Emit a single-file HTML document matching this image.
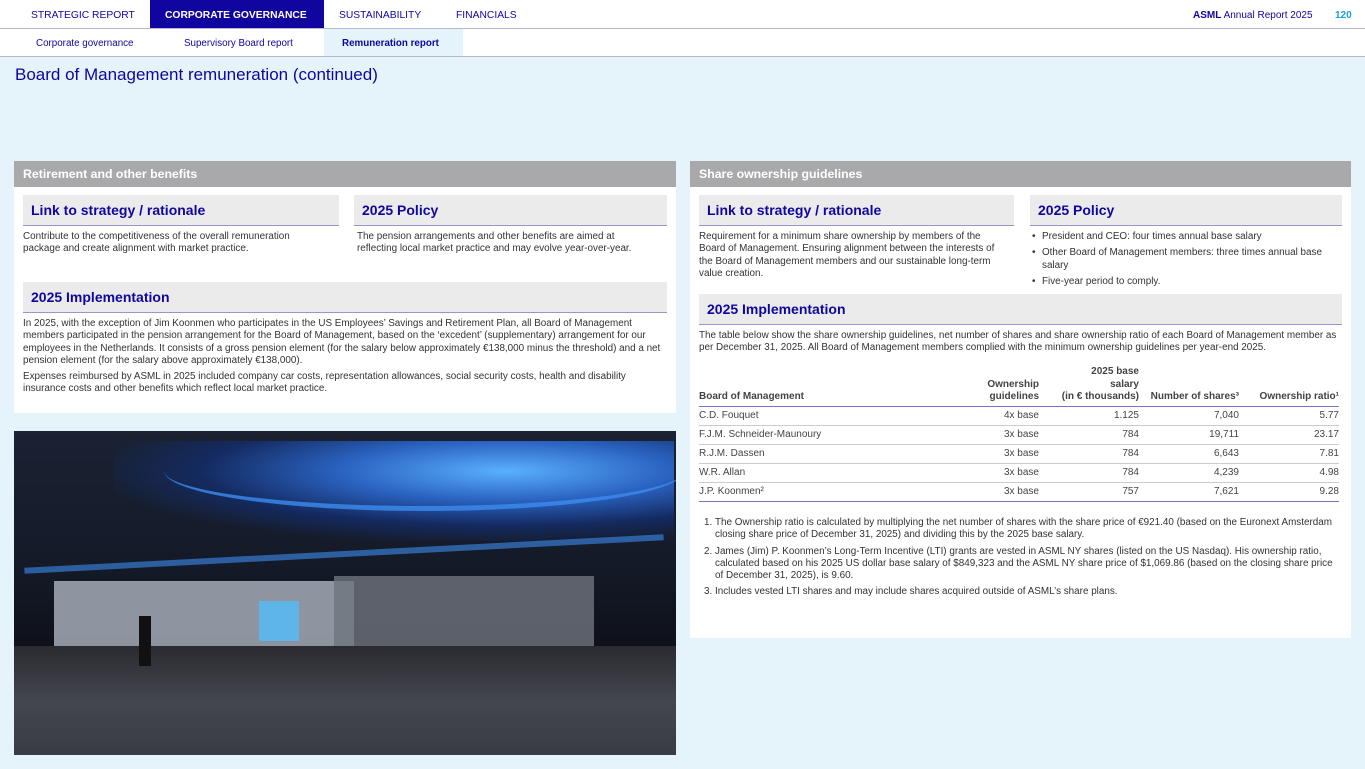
<!DOCTYPE html>
<html><head><meta charset="utf-8"><style>
*{margin:0;padding:0;box-sizing:border-box}
body{width:1365px;height:769px;overflow:hidden;background:#e5f3fb;font-family:"Liberation Sans",sans-serif;color:#222;position:relative}
.abs{position:absolute}
.top{left:0;top:0;width:1365px;height:29px;background:#fff;border-bottom:1px solid #b7b7d0}
.top span{position:absolute;top:10px;font-size:10.3px;color:#10069f}
.sub{left:0;top:29px;width:1365px;height:28px;background:#fff;border-bottom:1px solid #b7b7d0}
.sub span{position:absolute;top:9px;font-size:9.8px;color:#10069f}
h1{position:absolute;left:15px;top:65px;font-size:17px;font-weight:normal;color:#10069f}
.card{background:#fff}
.hdr{background:#a9a9ab;color:#fff;font-weight:bold;font-size:12.3px;padding:6px 9px;height:26px}
.box{position:absolute;background:#ebebec;border-bottom:1px solid #9b93c9;color:#10069f;font-weight:bold;font-size:14px;padding:7px 8px;height:31px}
.t{position:absolute;font-size:9.9px;line-height:12.3px;color:#333}
table{border-collapse:collapse;font-size:10px;color:#444}
td{height:19px;border-bottom:1px solid #ccc;text-align:right}
td:first-child{text-align:left}
th{font-weight:bold;text-align:right;vertical-align:bottom;padding-bottom:2px;color:#444;line-height:12.5px;border-bottom:1px solid #7d72c0}
th:first-child{text-align:left}
ul{list-style:none}
li{position:relative;padding-left:10px;margin-bottom:4px}
li:before{content:"•";position:absolute;left:0}
ol{padding-left:16px}
ol li{padding-left:0;margin-bottom:4px}
ol li:before{content:none}
</style></head><body>
<div class="abs top">
<span style="left:31px">STRATEGIC REPORT</span>
<div class="abs" style="left:150px;top:0;width:174px;height:28px;background:#10069f"></div>
<span style="left:165px;color:#fff;font-weight:bold">CORPORATE GOVERNANCE</span>
<span style="left:339px">SUSTAINABILITY</span>
<span style="left:456px">FINANCIALS</span>
<span style="left:1193px;font-size:10px"><b>ASML</b> Annual Report 2025</span>
<span style="left:1335px;font-size:10px;color:#1aa0d8;font-weight:bold">120</span>
</div>
<div class="abs sub">
<span style="left:36px">Corporate governance</span>
<span style="left:184px">Supervisory Board report</span>
<div class="abs" style="left:324px;top:0;width:139px;height:27px;background:#e5f3fb"></div>
<span style="left:342px;font-weight:bold">Remuneration report</span>
</div>
<h1>Board of Management remuneration (continued)</h1>

<div class="abs card" style="left:14px;top:161px;width:662px;height:252px">
<div class="hdr">Retirement and other benefits</div>
<div class="box" style="left:9px;top:34px;width:316px">Link to strategy / rationale</div>
<div class="box" style="left:340px;top:34px;width:313px">2025 Policy</div>
<div class="t" style="left:9px;top:70px;width:300px">Contribute to the competitiveness of the overall remuneration package and create alignment with market practice.</div>
<div class="t" style="left:343px;top:70px;width:300px">The pension arrangements and other benefits are aimed at reflecting local market practice and may evolve year-over-year.</div>
<div class="box" style="left:9px;top:121px;width:644px">2025 Implementation</div>
<div class="t" style="left:9px;top:157px;width:645px">In 2025, with the exception of Jim Koonmen who participates in the US Employees’ Savings and Retirement Plan, all Board of Management members participated in the pension arrangement for the Board of Management, based on the ‘excedent’ (supplementary) arrangement for our employees in the Netherlands. It consists of a gross pension element (for the salary below approximately €138,000 minus the threshold) and a net pension element (for the salary above approximately €138,000).<div style="height:4px"></div>Expenses reimbursed by ASML in 2025 included company car costs, representation allowances, social security costs, health and disability insurance costs and other benefits which reflect local market practice.</div>
</div>

<div class="abs" style="left:14px;top:431px;width:662px;height:324px;overflow:hidden;background:linear-gradient(180deg,#1a2233 0%,#141a28 40%,#0e1018 70%,#0a0c12 100%)">
<div class="abs" style="left:100px;top:10px;width:560px;height:100px;background:radial-gradient(ellipse at 70% 30%,#5ab0ff 0%,#2a62c0 30%,#142a60 55%,transparent 75%)"></div>
<div class="abs" style="left:150px;top:0px;width:520px;height:80px;border-radius:50%;border-bottom:5px solid #3c8cf0;opacity:.8"></div>
<div class="abs" style="left:10px;top:120px;width:640px;height:6px;background:#3c8cf0;opacity:.6;transform:rotate(-3deg)"></div>
<div class="abs" style="left:40px;top:150px;width:300px;height:80px;background:#b8c0cc;opacity:.75"></div>
<div class="abs" style="left:320px;top:145px;width:260px;height:85px;background:#6f747e;opacity:.8"></div>
<div class="abs" style="left:245px;top:170px;width:40px;height:40px;background:#5db5e8"></div>
<div class="abs" style="left:0;top:215px;width:662px;height:110px;background:linear-gradient(180deg,#2a2a30,#44464e 50%,#3a3c44)"></div>
<div class="abs" style="left:125px;top:185px;width:12px;height:50px;background:#111"></div>
</div>

<div class="abs card" style="left:690px;top:161px;width:661px;height:477px">
<div class="hdr">Share ownership guidelines</div>
<div class="box" style="left:9px;top:34px;width:315px">Link to strategy / rationale</div>
<div class="box" style="left:340px;top:34px;width:312px">2025 Policy</div>
<div class="t" style="left:9px;top:70px;width:310px">Requirement for a minimum share ownership by members of the Board of Management. Ensuring alignment between the interests of the Board of Management members and our sustainable long-term value creation.</div>
<ul class="t" style="left:342px;top:70px;width:290px"><li>President and CEO: four times annual base salary</li><li>Other Board of Management members: three times annual base salary</li><li>Five-year period to comply.</li></ul>
<div class="box" style="left:9px;top:133px;width:643px">2025 Implementation</div>
<div class="t" style="left:9px;top:169px;width:645px">The table below show the share ownership guidelines, net number of shares and share ownership ratio of each Board of Management member as per December 31, 2025. All Board of Management members complied with the minimum ownership guidelines per year-end 2025.</div>
<table class="abs" style="left:9px;top:205px;width:640px">
<tr><th style="width:230px">Board of Management</th><th style="width:110px">Ownership<br>guidelines</th><th style="width:100px">2025 base<br>salary<br>(in € thousands)</th><th style="width:100px">Number of shares³</th><th>Ownership ratio¹</th></tr>
<tr><td>C.D. Fouquet</td><td>4x base</td><td>1.125</td><td>7,040</td><td>5.77</td></tr>
<tr><td>F.J.M. Schneider-Maunoury</td><td>3x base</td><td>784</td><td>19,711</td><td>23.17</td></tr>
<tr><td>R.J.M. Dassen</td><td>3x base</td><td>784</td><td>6,643</td><td>7.81</td></tr>
<tr><td>W.R. Allan</td><td>3x base</td><td>784</td><td>4,239</td><td>4.98</td></tr>
<tr><td style="border-bottom:1px solid #7d72c0">J.P. Koonmen²</td><td style="border-bottom:1px solid #7d72c0">3x base</td><td style="border-bottom:1px solid #7d72c0">757</td><td style="border-bottom:1px solid #7d72c0">7,621</td><td style="border-bottom:1px solid #7d72c0">9.28</td></tr>
</table>
<ol class="t" style="left:9px;top:356px;width:635px;list-style:decimal">
<li>The Ownership ratio is calculated by multiplying the net number of shares with the share price of €921.40 (based on the Euronext Amsterdam closing share price of December 31, 2025) and dividing this by the 2025 base salary.</li>
<li>James (Jim) P. Koonmen’s Long-Term Incentive (LTI) grants are vested in ASML NY shares (listed on the US Nasdaq). His ownership ratio, calculated based on his 2025 US dollar base salary of $849,323 and the ASML NY share price of $1,069.86 (based on the closing share price of December 31, 2025), is 9.60.</li>
<li>Includes vested LTI shares and may include shares acquired outside of ASML’s share plans.</li>
</ol>
</div>
</body></html>
